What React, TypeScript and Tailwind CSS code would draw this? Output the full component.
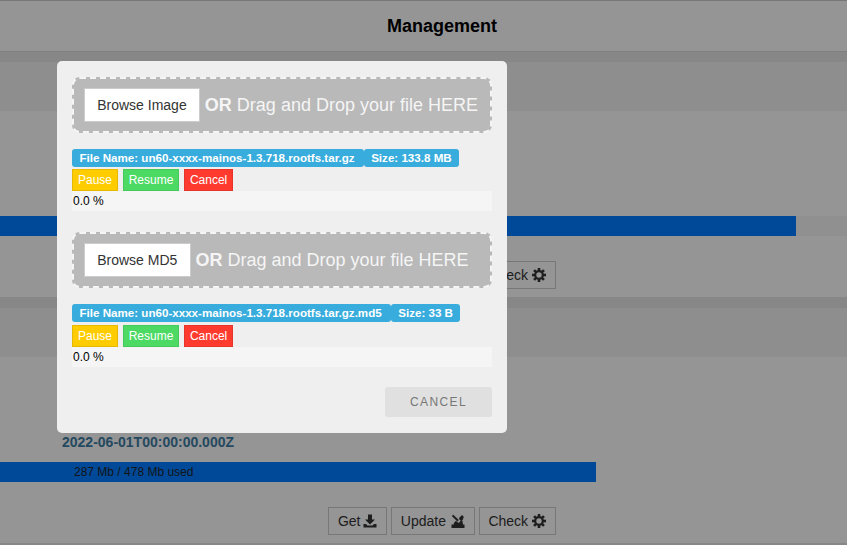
import React from "react";

function DownloadIcon() {
  return (
    <svg width="14" height="14" viewBox="0 0 14 14" fill="currentColor" className="shrink-0">
      <path d="M5 0.500h4V5.500h3L7 10.500 2 5.500h3z" />
      <path d="M0.500 10h2.500l1.500 1.500h5L11 10h2.500v3.500H0.500z" />
    </svg>
  );
}

function UpdateIcon() {
  return (
    <svg width="14" height="14" viewBox="0 0 14 14" fill="currentColor" className="shrink-0">
      <path d="M0.500 10.500h13V14H0.500z" />
      <path d="M2.500 11c.2-1.800 1-3.200 2.400-4l3 2 2.600-3.200 1 1.200.5 4z" />
      <path d="M2 0.500l5.800 5.500-1.400 1.500L1 2.200z" />
      <path d="M8.500 3.500L11 1l1.800 1.800-1 3-1.800 1.200-2-2z" />
    </svg>
  );
}

const teeth = [0, 45, 90, 135, 180, 225, 270, 315];

function CogIcon() {
  return (
    <svg width="14" height="14" viewBox="0 0 14 14" className="shrink-0">
      <circle cx="7" cy="7" r="3.800" fill="none" stroke="currentColor" strokeWidth="2.200" />
      {teeth.map((a) => (
        <rect key={a} x="5.700" y="0" width="2.600" height="3" fill="currentColor" transform={`rotate(${a} 7 7)`} />
      ))}
    </svg>
  );
}

function ActionButtons() {
  return (
    <div className="flex justify-center gap-1 text-sm text-[#333333]">
      <button className="flex items-center gap-[3px] h-7 px-[8.7px] border border-[#c6c6c6]">Get <DownloadIcon /></button>
      <button className="flex items-center gap-[5px] h-7 px-[8.7px] border border-[#c6c6c6]">Update <UpdateIcon /></button>
      <button className="flex items-center gap-1 h-7 px-[8.7px] border border-[#c6c6c6]">Check <CogIcon /></button>
    </div>
  );
}

function Section({ fill, date, used, track }: { fill: number; date?: string; used?: string; track?: boolean }) {
  return (
    <section>
      <div className="h-[49px] bg-[#ededed]" />
      <div className="h-[186px] bg-[#f8f8f8] flex flex-col">
        <div className="h-[75px] shrink-0" />
        <div className="h-[30px] shrink-0 pl-[62px] text-sm font-bold text-[#3c7aa0]">{date}</div>
        <div className={track ? "h-5 shrink-0 bg-[#f0f0f0]" : "h-5 shrink-0"}>
          <div className="h-5 bg-[#007bff] pl-[74px] text-xs leading-5 text-[#212529]" style={{ width: fill }}>{used}</div>
        </div>
        <div className="h-[25px] shrink-0" />
        <ActionButtons />
      </div>
    </section>
  );
}

function Upload({ label, name, size, extra, className }: { label: string; name: string; size: string; extra?: boolean; className?: string }) {
  return (
    <div className={className}>
      <div className="h-[56px] bg-[#b9b9b9] border-2 border-dashed border-[#f5f5f5] rounded-lg flex items-center pl-[10px]">
        <button className="h-[34px] px-[12.2px] bg-white border border-[#cccccc] text-sm text-[#333333]">{label}</button>
        <span className="ml-[5px] text-lg text-[#f5f5f5] whitespace-nowrap"><b>OR</b> Drag and Drop your file HERE</span>
      </div>
      <div className="flex mt-4 text-[11.6px] font-bold text-white">
        <span className="h-[18px] leading-[18px] pl-[7.5px] pr-[9.5px] bg-[#38acdc] rounded-[3px] whitespace-nowrap">File Name: {name}</span>
        <span className="h-[18px] leading-[18px] px-[7px] bg-[#38acdc] rounded-[3px] whitespace-nowrap">Size: {size}</span>
      </div>
      <div className={extra ? "flex gap-[5px] mt-[3px] text-xs text-white" : "flex gap-[5px] mt-[2px] text-xs text-white"}>
        <button className="h-[22px] px-[5px] bg-[#ffcc00] border border-[#e6b800]">Pause</button>
        <button className="h-[22px] px-[4.6px] bg-[#4cd964] border border-[#44c95a]">Resume</button>
        <button className="h-[22px] px-[5px] bg-[#ff3b30] border border-[#e6352b]">Cancel</button>
      </div>
      <div className="h-5 bg-[#f5f5f5] text-xs leading-5 pl-px text-black">0.0 %</div>
    </div>
  );
}

export default function App() {
  return (
    <div className="relative h-[545px] w-[847px] overflow-hidden font-['Liberation_Sans',Arial,sans-serif]">
      <div className="w-[884px] bg-[#e1e1e1] h-[545px]">
        <header className="h-[52px] bg-[#f8f8f8] border-y border-t-[#c6c6c6] border-b-[#d5d5d5] flex items-center justify-center text-lg font-bold text-black">Management</header>
        <div className="h-[10px]" />
        <Section fill={796} track />
        <div className="h-[11px]" />
        <Section fill={596} date="2022-06-01T00:00:00.000Z" used="287 Mb / 478 Mb used" />
      </div>
      <div className="absolute inset-0 bg-black/40" />
      <div className="absolute left-[57px] top-[61px] w-[450px] h-[372px] bg-[#efefef] rounded-[5px] px-[15px] pt-4">
        <Upload label="Browse Image" name="un60-xxxx-mainos-1.3.718.rootfs.tar.gz" size="133.8 MB" />
        <Upload className="mt-[21px]" extra label="Browse MD5" name="un60-xxxx-mainos-1.3.718.rootfs.tar.gz.md5" size="33 B" />
        <div className="flex justify-end mt-5">
          <button className="w-[107px] h-[30px] bg-[#e0e0e0] rounded-[3px] text-xs tracking-[1.4px] text-[#777777]">CANCEL</button>
        </div>
      </div>
    </div>
  );
}
